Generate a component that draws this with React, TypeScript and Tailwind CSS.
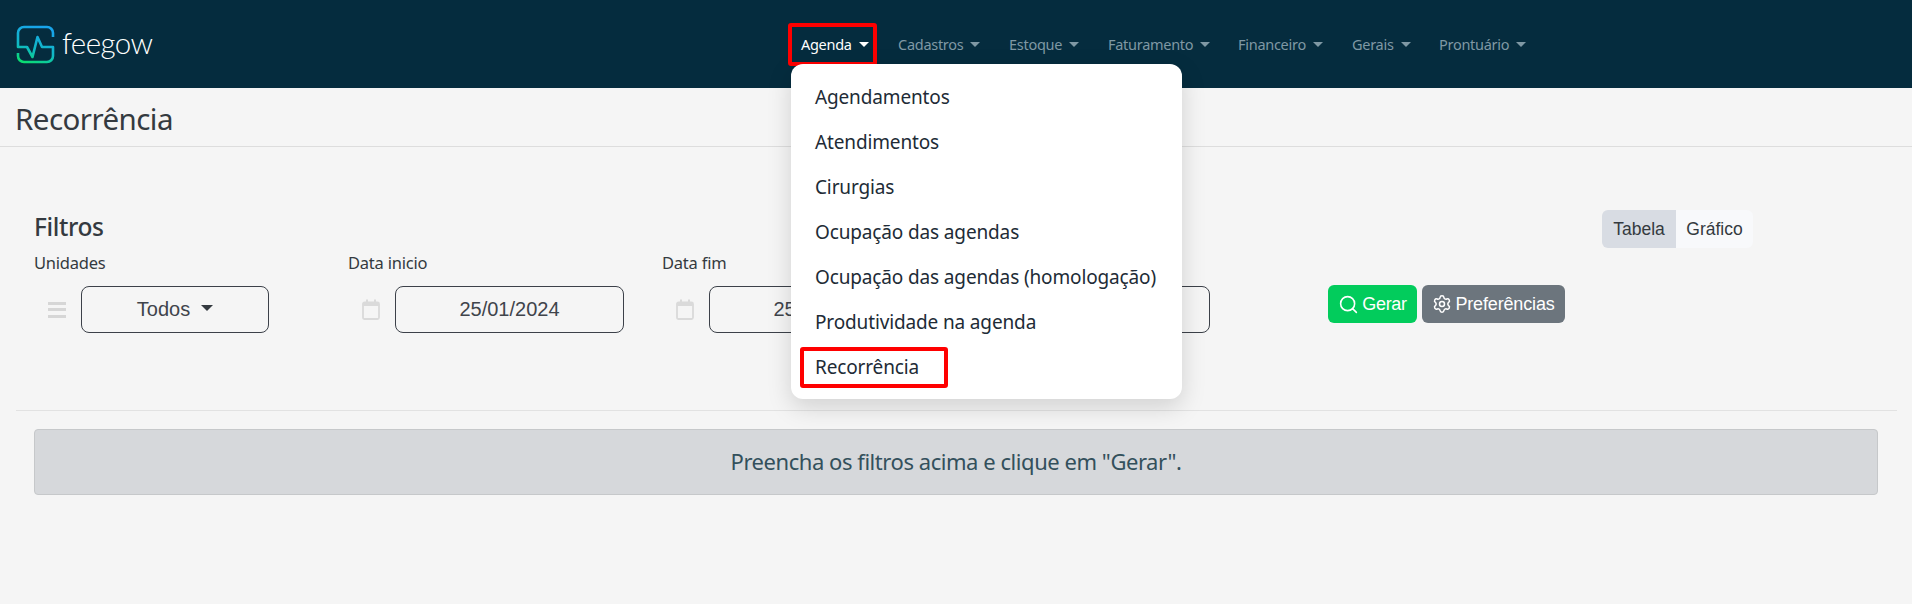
import React from "react";
import { Search, Settings } from "lucide-react";

const NAV = [
  { label: "Agenda", w: "w-[97px]" },
  { label: "Cadastros", w: "w-[111px]" },
  { label: "Estoque", w: "w-[99px]" },
  { label: "Faturamento", w: "w-[130px]" },
  { label: "Financeiro", w: "w-[114px]" },
  { label: "Gerais", w: "w-[87px]" },
  { label: "Prontuário", w: "w-[116px]" },
];

const MENU = [
  "Agendamentos",
  "Atendimentos",
  "Cirurgias",
  "Ocupação das agendas",
  "Ocupação das agendas (homologação)",
  "Produtividade na agenda",
  "Recorrência",
];

function Logo() {
  return (
    <svg width="40" height="40" viewBox="0 0 40 40" fill="none" className="shrink-0">
      <defs>
        <linearGradient id="lg" x1="20" y1="2" x2="8" y2="38" gradientUnits="userSpaceOnUse">
          <stop offset="0" stopColor="#18a4ea" />
          <stop offset="0.6" stopColor="#10b9c4" />
          <stop offset="1" stopColor="#0bdc72" />
        </linearGradient>
      </defs>
      <path
        d="M37 13V9a6 6 0 0 0-6-6H8a6 6 0 0 0-6 6v14h9l5.5 10 5-20 4.5 10h11v9a6 6 0 0 1-6 6H8a6 6 0 0 1-6-6v-3"
        stroke="url(#lg)"
        strokeWidth="2.6"
        strokeLinejoin="round"
      />
    </svg>
  );
}

function Caret({ className }: { className: string }) {
  return <span className={"inline-block h-0 w-0 border-x-[5px] border-t-[5px] border-x-transparent " + className} />;
}

function CalendarIcon() {
  return (
    <svg width="18" height="21" viewBox="0 0 18 21" fill="none" className="shrink-0">
      <rect x="1" y="3.5" width="16" height="16.5" rx="1.5" stroke="#dadada" strokeWidth="1.8" />
      <rect x="1" y="3" width="16" height="4" fill="#dadada" />
      <rect x="4" y="0.5" width="2" height="4" fill="#dadada" />
      <rect x="12" y="0.5" width="2" height="4" fill="#dadada" />
    </svg>
  );
}

function MenuIcon() {
  return (
    <span className="flex w-[18px] shrink-0 flex-col gap-[3.5px]">
      <span className="h-[3px] bg-[#d6d6d6]" />
      <span className="h-[3px] bg-[#d6d6d6]" />
      <span className="h-[3px] bg-[#d6d6d6]" />
    </span>
  );
}

function Field({
  label,
  icon,
  value,
  boxClass,
  caret,
}: {
  label: string;
  icon: React.ReactNode;
  value: string;
  boxClass: string;
  caret?: boolean;
}) {
  return (
    <div className="w-[314px] shrink-0">
      <div className="h-[24px] text-[16.5px] leading-[24px] tracking-[-0.22px] text-[#343a40] [font-family:'Noto_Sans',sans-serif]">
        {label}
      </div>
      <div className="mt-[11px] flex items-center">
        <div className="flex w-[47px] justify-center pr-[1px]">{icon}</div>
        <div
          className={
            "flex h-[47px] items-center justify-center gap-[11px] rounded-[8px] border border-[#3c4149] pb-[1px] text-[20px] text-[#3f444b] [font-family:'Liberation_Sans',sans-serif] " +
            boxClass
          }
        >
          {value}
          {caret && <Caret className="mb-[2px] border-t-[#343a40] border-x-[6px] border-t-[6px]" />}
        </div>
      </div>
    </div>
  );
}

export default function App() {
  return (
    <div className="relative h-[604px] w-full overflow-hidden bg-[#f5f5f5] [font-family:'Noto_Sans',sans-serif]">
      <nav className="flex h-[88px] items-center bg-[#052c3e]">
        <div className="flex w-[786px] shrink-0 items-center gap-[6px] pl-[16px]">
          <Logo />
          <span className="mb-[2px] text-[29.5px] font-light leading-none tracking-[-0.6px] text-white [font-family:'Lato',sans-serif]">
            feegow
          </span>
        </div>
        <ul className="mt-[1px] flex items-center">
          {NAV.map((item, i) => (
            <li
              key={item.label}
              className={
                "relative flex items-center gap-[7px] pl-[15px] text-[14.5px] tracking-[-0.28px] " +
                item.w +
                (i === 0 ? " text-white" : " text-[#7f98a4]")
              }
            >
              {item.label}
              <Caret className={i === 0 ? "border-t-white" : "border-t-[#7f98a4]"} />
              {i === 0 && (
                <span className="absolute left-[2px] top-[-11px] h-[43px] w-[89px] rounded-[3px] border-[4px] border-[#ff0000]" />
              )}
            </li>
          ))}
        </ul>
      </nav>

      <header className="flex h-[59px] items-center border-b-[1.5px] border-[#dddddd] pl-[15px]">
        <h1 className="pt-[4px] text-[29.5px] leading-none tracking-[-0.55px] text-[#343a40]">Recorrência</h1>
      </header>

      <section className="px-[34px] pt-[63px]">
        <div className="flex h-[38px] items-center justify-between pr-[125px]">
          <h2 className="mb-[4px] text-[24.5px] font-medium leading-none tracking-[-0.4px] text-[#343a40]">Filtros</h2>
          <div className="flex h-[38px] text-[17.5px] text-[#343a40] [font-family:'Liberation_Sans',sans-serif]">
            <span className="flex w-[74px] items-center justify-center rounded-l-[6px] bg-[#d8dce3]">Tabela</span>
            <span className="flex w-[77px] items-center justify-center rounded-r-[6px] bg-[#f8f9fb]">Gráfico</span>
          </div>
        </div>

        <div className="mt-[3px] flex items-start">
          <Field label="Unidades" icon={<MenuIcon />} value="Todos" boxClass="w-[188px]" caret />
          <Field label="Data inicio" icon={<CalendarIcon />} value="25/01/2024" boxClass="w-[229px]" />
          <Field label="Data fim" icon={<CalendarIcon />} value="25/01/2024" boxClass="w-[229px]" />
          <Field label="" icon={null} value="" boxClass="w-[187px]" />
          <div className="ml-[38px] mt-[34px] flex gap-[5px] text-[18px] text-white [font-family:'Liberation_Sans',sans-serif]">
            <button className="flex h-[38px] w-[89px] items-center justify-center gap-[3px] rounded-[6px] bg-[#02cc5c] tracking-[-0.3px]">
              <Search size={21} strokeWidth={1.8} />
              Gerar
            </button>
            <button className="flex h-[38px] w-[143px] items-center justify-center gap-[3px] rounded-[6px] bg-[#6c757d] tracking-[-0.15px]">
              <Settings size={20} strokeWidth={1.8} />
              Preferências
            </button>
          </div>
        </div>
      </section>

      <hr className="mx-[16px] mt-[77px] w-[1881px] border-t-[1.5px] border-[#e2e2e2]" />

      <div className="ml-[34px] mt-[18px] flex h-[66px] w-[1844px] items-center justify-center rounded-[4px] border border-[#c6c8ca] bg-[#d6d8db] pb-[1px] text-[22px] tracking-[-0.45px] text-[#33505c]">
        Preencha os filtros acima e clique em "Gerar".
      </div>

      <div className="absolute left-[791px] top-[64px] flex h-[335px] w-[391px] flex-col justify-center rounded-[12px] bg-white shadow-[0_8px_24px_rgba(0,0,0,0.15)]">
        {MENU.map((m, i) => (
          <div key={m} className="relative flex h-[45px] items-center pl-[24px] pt-[2px] text-[19px] tracking-[-0.14px] text-[#212b36]">
            {m}
            {i === 6 && (
              <span className="absolute left-[9px] top-[3px] h-[41px] w-[148px] rounded-[3px] border-[4px] border-[#ff0000]" />
            )}
          </div>
        ))}
      </div>
    </div>
  );
}
